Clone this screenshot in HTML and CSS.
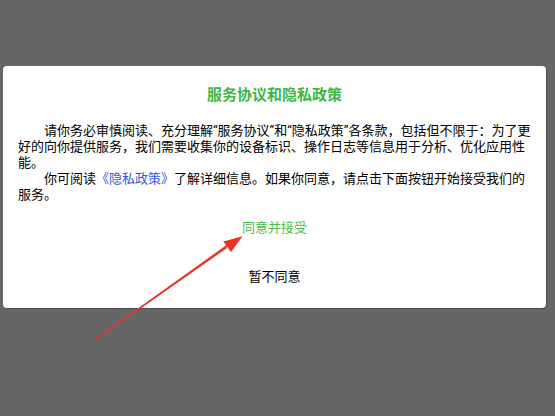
FILE: index.html
```html
<!DOCTYPE html>
<html lang="zh-CN">
<head>
<meta charset="utf-8">
<link rel="stylesheet" href="styles.css">
</head>
<body>
<div class="dialog">
  <h1 class="title">服务协议和隐私政策</h1>
  <div class="content">
    <p class="para">请你务必审慎阅读、充分理解“服务协议”和“隐私政策”各条款，包括但不限于：为了更好的向你提供服务，我们需要收集你的设备标识、操作日志等信息用于分析、优化应用性能。</p>
    <p class="para">你可阅读<a class="link">《隐私政策》</a>了解详细信息。如果你同意，请点击下面按钮开始接受我们的服务。</p>
  </div>
  <div class="actions">
    <div class="btn btn-agree">同意并接受</div>
    <div class="btn btn-refuse">暂不同意</div>
  </div>
</div>
<svg class="arrow" width="555" height="416" viewBox="0 0 555 416">
  <polygon points="95,340.5 94.3,339.5 227.6,244.3 226.4,248.4" fill="#ea3323"/>
  <polygon points="242.5,236.3 223.4,241.6 231,252" fill="#ea3323"/>
</svg>
</body>
</html>
```
FILE: styles.css
```css
html, body {
  margin: 0;
  padding: 0;
}
body {
  width: 555px;
  height: 416px;
  background: #666666;
  font-family: Roboto, "Noto Sans CJK SC", sans-serif;
  position: relative;
  overflow: hidden;
  padding-top: 66px;
  box-sizing: border-box;
}
.dialog {
  margin-left: 3px;
  width: 543px;
  height: 242px;
  background: #ffffff;
  border-radius: 4px;
  box-shadow: 1px 1px 1px rgba(0,0,0,0.25);
  display: flex;
  flex-direction: column;
  box-sizing: border-box;
  padding: 19px 0 0 0;
}
.title {
  margin: 0;
  font-size: 15px;
  line-height: 20px;
  font-weight: bold;
  color: #3cb843;
  text-align: center;
}
.content {
  margin-top: 18px;
  padding: 0 14px 0 15px;
  font-size: 13px;
  line-height: 16px;
  color: #000000;
}
.para {
  margin: 0;
  text-indent: 2em;
}
.link {
  color: #3457dc;
  text-decoration: none;
}
.actions {
  margin-top: 15px;
  display: flex;
  flex-direction: column;
  align-items: center;
  gap: 29px;
}
.btn {
  font-size: 13px;
  line-height: 20px;
}
.btn-agree {
  color: #4cbd4c;
}
.btn-refuse {
  color: #000000;
}
.arrow {
  position: absolute;
  left: 0;
  top: 0;
}
```
